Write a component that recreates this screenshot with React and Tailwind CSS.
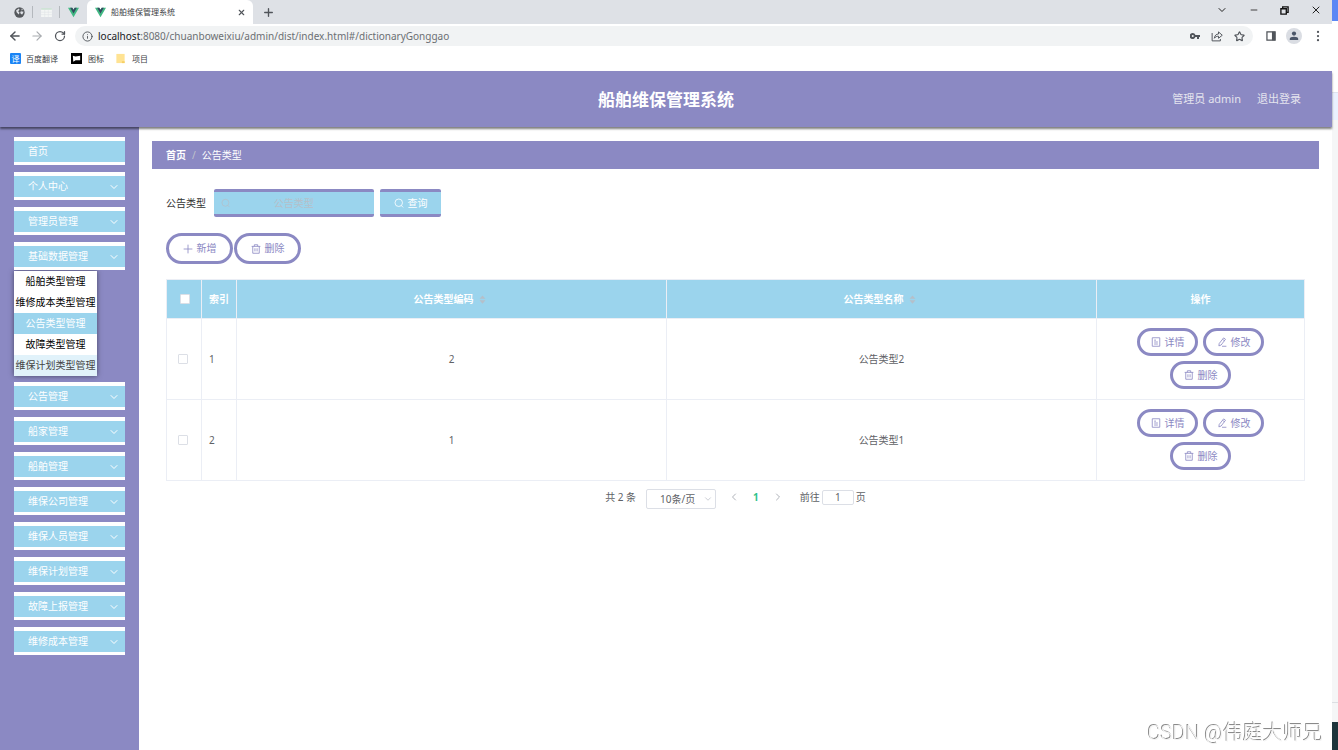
import React from 'react';
import { ArrowLeft, ArrowRight, RotateCw, Info, X, Plus, ChevronDown, ChevronLeft, ChevronRight, Minus, Star, Copy } from 'lucide-react';

const topMenus = ['首页', '个人中心', '管理员管理', '基础数据管理'];
const bottomMenus = [
  '公告管理',
  '船家管理',
  '船舶管理',
  '维保公司管理',
  '维保人员管理',
  '维保计划管理',
  '故障上报管理',
  '维修成本管理',
];
const subMenus = [
  { name: '船舶类型管理' },
  { name: '维修成本类型管理' },
  { name: '公告类型管理', state: 'active' },
  { name: '故障类型管理' },
  { name: '维保计划类型管理', state: 'hover' },
];
const rows = [
  { index: 1, code: '2', name: '公告类型2' },
  { index: 2, code: '1', name: '公告类型1' },
];

const Icon = ({ children, className = 'size-[10px]' }) => (
  <svg
    viewBox="0 0 16 16"
    className={className}
    fill="none"
    stroke="currentColor"
    strokeWidth="1.3"
    aria-hidden="true"
  >
    {children}
  </svg>
);

const SearchIcon = () => (
  <Icon>
    <circle cx="7.6" cy="7.6" r="6" />
    <path d="M11.6 12l3 3" />
  </Icon>
);

const PlusIcon = () => (
  <Icon>
    <path d="M8 1v14M1 8h14" />
  </Icon>
);

const TrashIcon = () => (
  <Icon>
    <path d="M1 3.8h14M5.3 3.6V1.2h5.4v2.4M2.8 3.8v11h10.4v-11M6.3 6.8v5M9.7 6.8v5" />
  </Icon>
);

const DocumentIcon = () => (
  <Icon>
    <path d="M2 1.2h12v13.6H2zM5 5h3M5 8h6M5 11.2h6" />
  </Icon>
);

const EditIcon = () => (
  <Icon>
    <path d="M10.6 1.4l3 2.2-7 9.2-3.6 1.4.5-3.8zM9 3.8l3 2.2M8 14.8h7" />
  </Icon>
);

const VueLogo = () => (
  <svg viewBox="0 0 24 21" className="size-[11px] shrink-0" aria-hidden="true">
    <path fill="#41b883" d="M0 0h9.3L12 4.6 14.7 0H24L12 20.8z" />
    <path fill="#34495e" d="M4.8 0h4.5L12 4.6 14.7 0h4.5L12 12.5z" />
  </svg>
);

const BrowserChrome = () => (
  <div className="text-[#50545a]">
    <div className="flex h-6 items-center bg-[#dee1e6]">
      <button aria-label="Globe tab" className="ml-[14px]">
        <svg viewBox="0 0 16 16" className="size-[11px]" aria-hidden="true">
          <circle cx="8" cy="8" r="7.5" fill="#55585c" />
          <path fill="#dee1e6" d="M3 5l4-3 1 2-2 2 2 2-1 3-3-3zM10 6l4 1-2 4-2-1-1-2zM11 2l2 2-2 1z" />
        </svg>
      </button>
      <span className="ml-[7px] h-3 w-px bg-[#b4b8bd]" />
      <button aria-label="Table tab" className="ml-2">
        <svg viewBox="0 0 12 10" className="h-[9px] w-[11px]" aria-hidden="true">
          <path fill="#f4f6f5" d="M0 0h12v10H0z" />
          <path fill="#cfe3d6" d="M0 0h12v2H0z" />
          <path stroke="#e0e3e6" strokeWidth=".6" d="M0 4.7h12M0 7.3h12M4 2v8M8 2v8" />
        </svg>
      </button>
      <span className="ml-[7px] h-3 w-px bg-[#b4b8bd]" />
      <button aria-label="Vue tab" className="ml-2">
        <VueLogo />
      </button>
      <div className="ml-2 flex h-6 w-[166px] items-center rounded-t-md bg-white pr-[7px] pl-2">
        <VueLogo />
        <span className="ml-[5px] flex-1 text-[8px] text-[#3c4043]">船舶维保管理系统</span>
        <button aria-label="Close tab">
          <X className="size-[9px]" strokeWidth={3} />
        </button>
      </div>
      <button aria-label="New tab" className="ml-[9px]">
        <Plus className="size-[13px]" strokeWidth={2.5} />
      </button>
      <div className="ml-auto flex items-center gap-[21px] pr-[10px] pb-1 text-[#222]">
        <button aria-label="Tab search"><ChevronDown className="size-3" /></button>
        <button aria-label="Minimize"><Minus className="size-[10px]" /></button>
        <button aria-label="Restore">
          <svg viewBox="0 0 10 10" className="size-[9px]" fill="none" stroke="#111" strokeWidth="1.5" aria-hidden="true">
            <path d="M1 3h6v6H1zM3 3V1h6v6H7" />
          </svg>
        </button>
        <button aria-label="Close"><X className="size-3" /></button>
      </div>
    </div>

    <div className="flex h-6 items-center pr-2 pl-2">
      <button aria-label="Back"><ArrowLeft className="size-[14px]" strokeWidth={2.5} /></button>
      <button aria-label="Forward" className="ml-2 text-[#a8abaf]">
        <ArrowRight className="size-[14px]" strokeWidth={2} />
      </button>
      <button aria-label="Reload" className="ml-[10px]">
        <RotateCw className="size-3" strokeWidth={2.5} />
      </button>
      <div className="ml-[9px] flex h-5 flex-1 items-center rounded-full bg-[#f1f3f4] pr-2 pl-[7px]">
        <Info className="size-[11px]" />
        <p className="ml-[5px] flex-1 text-[10px] text-[#6b6f73]">
          <span className="text-[#202124]">localhost</span>
          :8080/chuanboweixiu/admin/dist/index.html#/dictionaryGonggao
        </p>
        <div className="flex items-center gap-[11px]">
          <button aria-label="Passwords">
            <svg viewBox="0 0 20 12" className="h-[6px] w-[10px]" aria-hidden="true">
              <path
                fill="#50545a"
                fillRule="evenodd"
                d="M5.5 0a6 6 0 015.4 3.8H20v4.4h-2V12h-4V8.2h-3.1A6 6 0 115.5 0zm0 4a2 2 0 100 4 2 2 0 000-4z"
              />
            </svg>
          </button>
          <button aria-label="Share">
            <Icon className="size-3">
              <path d="M1.5 4v10.5h11V12M4.5 11C5 7 7 5.5 10 5.3V2.5L15 7l-5 4V8.3C7.5 8.3 6 9 4.500 11z" />
            </Icon>
          </button>
          <button aria-label="Bookmark"><Star className="size-[11px]" strokeWidth={2.5} /></button>
        </div>
      </div>
      <div className="ml-[13px] flex items-center gap-[10px]">
        <button aria-label="Side panel">
          <svg viewBox="0 0 16 16" className="size-[10px]" aria-hidden="true">
            <path fill="none" stroke="#50545a" strokeWidth="2" d="M1.5 1.5h13v13h-13z" />
            <path fill="#50545a" d="M9.5 1h5.5v14H9.5z" />
          </svg>
        </button>
        <button aria-label="Profile">
          <svg viewBox="0 0 16 16" className="size-4" aria-hidden="true">
            <circle cx="8" cy="8" r="8" fill="#dadde3" />
            <circle cx="8" cy="5.600" r="2.100" fill="#4a5568" />
            <path fill="#4a5568" d="M3.800 12V10.800q0-2 4.200-2t4.200 2V12z" />
          </svg>
        </button>
        <button aria-label="Menu">
          <svg viewBox="0 0 16 16" className="size-3" fill="#50545a" aria-hidden="true">
            <circle cx="8" cy="2.500" r="1.500" />
            <circle cx="8" cy="8" r="1.500" />
            <circle cx="8" cy="13.500" r="1.500" />
          </svg>
        </button>
      </div>
    </div>

    <nav className="flex h-[23px] items-center pb-[2px] pl-[10px] text-[8px] text-[#3c4043]">
      <a href="#fanyi" className="flex items-center gap-[5px]">
        <span className="flex size-[11px] items-center justify-center rounded-[1px] bg-[#1a84f5] text-[8px] text-white">译</span>
        百度翻译
      </a>
      <a href="#tubiao" className="ml-[13px] flex items-center gap-[6px]">
        <svg viewBox="0 0 12 12" className="size-[11px]" aria-hidden="true">
          <path d="M0 0h12v12H0z" />
          <path fill="#fff" d="M2 3l3 .8L10 3v5H5L2.500 9.500z" />
        </svg>
        图标
      </a>
      <a href="#xiangmu" className="ml-[11px] flex items-center gap-[6px]">
        <svg viewBox="0 0 11 12" className="size-[11px]" aria-hidden="true">
          <path fill="#ffe393" d="M1 1h9v10H1z" />
          <path fill="#f6cf63" d="M7 9h3v2H7z" />
        </svg>
        项目
      </a>
    </nav>
  </div>
);

const MenuItem = ({ name, arrow = true }) => (
  <button className="flex h-7 w-full items-center justify-between border-t-4 border-b-[3px] border-white bg-[#9bd4ed] pr-[5px] pl-[14px] text-white">
    {name}
    {arrow && <ChevronDown className="size-3" strokeWidth={2} />}
  </button>
);

const Sidebar = () => (
  <aside className="w-[139px] shrink-0 bg-[#8b89c3] px-[14px] pt-[10px]">
    <div className="flex flex-col gap-[7px]">
      {topMenus.map((name) => (
        <MenuItem key={name} name={name} arrow={name !== '首页'} />
      ))}
    </div>
    <ul className="mt-px mb-[6px] w-[83px] bg-white shadow-[0_0_5px_rgba(0,0,0,0.5)]">
      {subMenus.map(({ name, state }) => (
        <li key={name}>
          <a
            href="#menu"
            className={`flex h-[21px] items-center justify-center whitespace-nowrap ${
              state === 'active'
                ? 'bg-[#9bd4ed] text-white'
                : state === 'hover'
                  ? 'bg-[#e1f2fa] text-[#444]'
                  : 'text-black'
            }`}
          >
            {name}
          </a>
        </li>
      ))}
    </ul>
    <div className="flex flex-col gap-[7px]">
      {bottomMenus.map((name) => (
        <MenuItem key={name} name={name} />
      ))}
    </div>
  </aside>
);

const ActionButton = ({ icon, children }) => (
  <button className="flex h-7 w-[61px] items-center justify-center gap-1 rounded-full border-[3px] border-[#8b89c3] bg-white text-[#8b89c3]">
    {icon}
    {children}
  </button>
);

const ToolButton = ({ icon, children }) => (
  <button className="flex h-[31px] w-[67px] items-center justify-center gap-1 rounded-full border-[3px] border-[#8b89c3] bg-white text-[#8b89c3]">
    {icon}
    {children}
  </button>
);

const SortArrows = () => (
  <svg viewBox="0 0 8 12" className="mr-1 ml-[5px] inline h-[9px] w-[7px]" fill="#b5bfc9" aria-hidden="true">
    <path d="M4 0.500l4 4.500H0zM4 11.500L0 7h8z" />
  </svg>
);

const CheckBox = ({ label }) => (
  <input
    type="checkbox"
    aria-label={label}
    className="block size-[10px] appearance-none rounded-[1px] border border-[#dcdfe6] bg-white"
  />
);

const DataTable = () => (
  <table className="mt-[15px] w-full table-fixed border-collapse text-center text-[#606266]">
    <colgroup>
      <col className="w-[35px]" />
      <col className="w-[35px]" />
      <col />
      <col />
      <col className="w-[208px]" />
    </colgroup>
    <thead>
      <tr className="h-[39px] bg-[#9bd4ed] text-white [&>th]:border [&>th]:border-[#ebeef5]">
        <th className="pl-[13px]"><CheckBox label="全选" /></th>
        <th className="pl-[7px] text-left">索引</th>
        <th>公告类型编码<SortArrows /></th>
        <th>公告类型名称<SortArrows /></th>
        <th>操作</th>
      </tr>
    </thead>
    <tbody>
      {rows.map((row) => (
        <tr key={row.index} className="h-[81px] [&>td]:border [&>td]:border-[#ebeef5]">
          <td className="pl-[11px]"><CheckBox label={row.name} /></td>
          <td className="pl-[7px] text-left">{row.index}</td>
          <td>{row.code}</td>
          <td>{row.name}</td>
          <td>
            <div className="flex flex-wrap justify-center gap-[5px] px-8 pb-px">
              <ActionButton icon={<DocumentIcon />}>详情</ActionButton>
              <ActionButton icon={<EditIcon />}>修改</ActionButton>
              <ActionButton icon={<TrashIcon />}>删除</ActionButton>
            </div>
          </td>
        </tr>
      ))}
    </tbody>
  </table>
);

const Pagination = () => (
  <div className="mt-2 flex items-start justify-center text-[#606266]">
    <span className="leading-4">共 2 条</span>
    <div className="relative ml-[10px]">
      <select
        aria-label="每页条数"
        className="h-5 w-[70px] appearance-none rounded-[2px] border border-[#dcdfe6] bg-white pl-[13px]"
      >
        <option>10条/页</option>
      </select>
      <ChevronDown className="pointer-events-none absolute top-[5px] right-[3px] size-[10px] text-[#c0c4cc]" />
    </div>
    <div className="ml-3 flex h-4 items-center gap-[13px]">
      <button aria-label="上一页" className="text-[#b0b3ba]"><ChevronLeft className="size-3" /></button>
      <button className="font-bold text-[#2fc28b]">1</button>
      <button aria-label="下一页" className="text-[#b0b3ba]"><ChevronRight className="size-3" /></button>
    </div>
    <label className="ml-4 flex h-4 items-center gap-[2px]">
      前往
      <input
        defaultValue="1"
        className="h-[15px] w-8 rounded-[2px] border border-[#dcdfe6] text-center"
      />
      页
    </label>
  </div>
);

const Content = () => (
  <main className="min-w-0 flex-1 px-[13px] pt-[14px]">
    <div className="flex h-7 items-center bg-[#8b89c3] px-[14px] text-white">
      <a href="#home" className="font-bold">首页</a>
      <span className="mx-[6px] text-[#c0c4cc]">/</span>
      <span>公告类型</span>
    </div>
    <div className="px-[14px] pt-5">
      <form className="flex items-center">
        <label htmlFor="keyword" className="mr-2 text-[#333]">公告类型</label>
        <div className="flex h-7 w-[160px] items-center rounded-[2px] border-y-[3px] border-[#8b89c3] bg-[#9bd4ed] px-[7px] text-[#b5bfc9]">
          <SearchIcon />
          <input
            id="keyword"
            placeholder="公告类型"
            className="w-full min-w-0 bg-transparent pr-[10px] text-center outline-none placeholder:text-[#b5bfc9]"
          />
        </div>
        <button
          type="button"
          className="ml-[6px] flex h-7 w-[61px] items-center justify-center gap-1 rounded-[2px] border-y-[3px] border-[#8b89c3] bg-[#9bd4ed] text-white"
        >
          <SearchIcon />
          查询
        </button>
      </form>
      <div className="mt-4 flex gap-px">
        <ToolButton icon={<PlusIcon />}>新增</ToolButton>
        <ToolButton icon={<TrashIcon />}>删除</ToolButton>
      </div>
      <DataTable />
      <Pagination />
    </div>
  </main>
);

const App = () => {
  return (
    <div className="flex min-h-screen bg-white font-['Noto_Sans','Noto_Sans_CJK_SC',sans-serif] text-[10px]">
      <div className="flex min-w-0 flex-1 flex-col">
        <BrowserChrome />
        <header className="relative grid h-14 grid-cols-3 items-center bg-[#8b89c3] pt-px shadow-[0_2px_2px_rgba(0,0,0,0.5)]">
          <h1 className="col-start-2 text-center text-[17px] font-bold text-white">船舶维保管理系统</h1>
          <div className="flex justify-end gap-4 pr-[31px] text-[11px] text-[#e4e4ee]">
            <span>管理员 admin</span>
            <button>退出登录</button>
          </div>
        </header>
        <div className="flex flex-1">
          <Sidebar />
          <Content />
        </div>
      </div>

      {/* edge of the window behind */}
      <div className="flex w-[6px] shrink-0 flex-col bg-[#f5f6f7]">
        <div className="h-[21px] bg-[#5b87f5]" />
        <div className="h-[71px] bg-white" />
        <div className="h-7 border-t border-[#dfe3ee] bg-[#eaf1ff]" />
        <div className="mt-auto h-5 border-t border-[#dcdfe3] bg-[#f5f6f7]" />
        <div className="h-7 bg-[#1d353c]" />
      </div>

      <p className="fixed right-[15px] bottom-[3px] font-['Roboto','Noto_Sans_CJK_SC',sans-serif] text-[20px] leading-7 font-light text-[#f4f4f4] [text-shadow:-1px_-1px_0_#8a8a8a]">
        CSDN @伟庭大师兄
      </p>
    </div>
  );
};

export default App;
